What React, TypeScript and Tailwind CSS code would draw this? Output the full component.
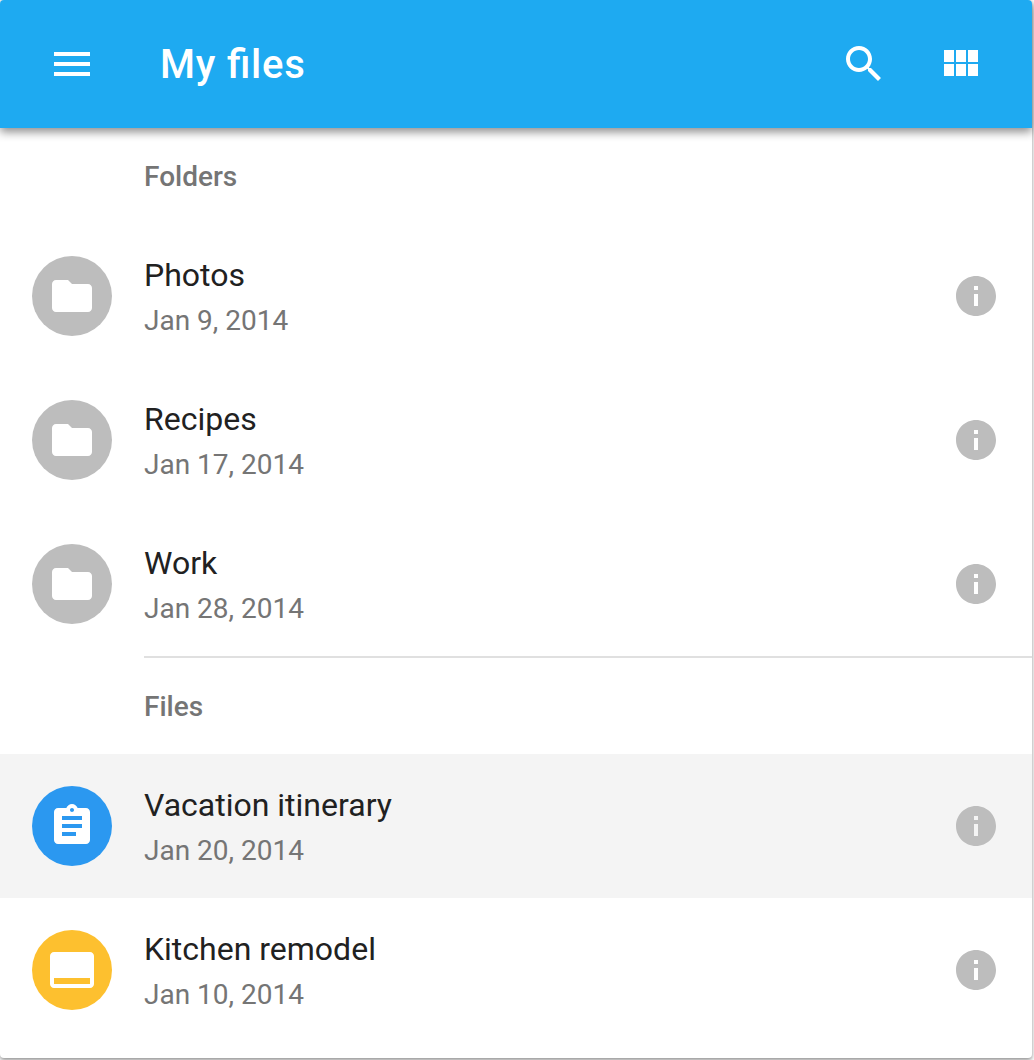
import type { ReactNode } from 'react';

const FOLDER = 'M10 4H4c-1.1 0-1.99.9-1.99 2L2 18c0 1.1.9 2 2 2h16c1.1 0 2-.9 2-2V8c0-1.1-.9-2-2-2h-8l-2-2z';
const ASSIGNMENT =
  'M19 3h-4.18C14.4 1.84 13.3 1 12 1c-1.3 0-2.4.84-2.82 2H5c-1.1 0-2 .9-2 2v14c0 1.1.9 2 2 2h14c1.1 0 2-.9 2-2V5c0-1.1-.9-2-2-2zm-7 0c.55 0 1 .45 1 1s-.45 1-1 1-1-.45-1-1 .45-1 1-1zm2 14H7v-2h7v2zm3-4H7v-2h10v2zm0-4H7V7h10v2z';
const SLIDE = 'M21 3H3c-1.1 0-2 .9-2 2v14c0 1.1.9 2 2 2h18c1.1 0 2-.9 2-2V5c0-1.1-.9-2-2-2zm0 16H3v-3h18v3z';
const INFO = 'M12 2C6.48 2 2 6.48 2 12s4.48 10 10 10 10-4.48 10-10S17.52 2 12 2zm1 15h-2v-6h2v6zm0-8h-2V7h2v2z';
const MENU = 'M3 18h18v-2H3v2zm0-5h18v-2H3v2zm0-7v2h18V6H3z';
const SEARCH =
  'M15.5 14h-.79l-.28-.27C15.41 12.59 16 11.11 16 9.5 16 5.91 13.09 3 9.5 3S3 5.91 3 9.5 5.91 16 9.5 16c1.61 0 3.09-.59 4.23-1.57l.27.28v.79l5 4.99L20.49 19l-4.99-5zm-6 0C7.01 14 5 11.99 5 9.5S7.01 5 9.5 5 14 7.01 14 9.5 11.99 14 9.5 14z';
const MODULES = 'M4 11h5V5H4v6zm0 7h5v-6H4v6zm6 0h5v-6h-5v6zm6 0h5v-6h-5v6zm-6-7h5V5h-5v6zm6-6v6h5V5h-5z';

function Icon({ d, className = '' }: { d: string; className?: string }) {
  return (
    <svg viewBox="0 0 24 24" className={`block h-12 w-12 shrink-0 ${className}`} fill="currentColor">
      <path d={d} />
    </svg>
  );
}

function Subheader({ children }: { children: ReactNode }) {
  return (
    <h3 className="flex h-24 items-center pl-36 pt-0.5 text-[28px] font-medium leading-8 text-[#757575]">{children}</h3>
  );
}

type RowProps = { name: string; date: string; icon: string; color: string; active?: boolean };

function Row({ name, date, icon, color, active }: RowProps) {
  return (
    <li className={`flex h-36 items-center px-8 ${active ? 'bg-[#f4f4f4]' : ''}`}>
      <div className={`flex h-20 w-20 shrink-0 items-center justify-center rounded-full text-white ${color}`}>
        <Icon d={icon} />
      </div>
      <div className="ml-8 flex-1">
        <div className="text-[32px] leading-[48px] text-[#212121]">{name}</div>
        <div className="-mb-px pt-px text-[28px] leading-[42px] text-[#757575]">{date}</div>
      </div>
      <button aria-label="Details">
        <Icon d={INFO} className="text-[#bdbdbd]" />
      </button>
    </li>
  );
}

export default function App() {
  return (
    <div className="h-[1060px] w-[1034px] overflow-hidden bg-white font-[Roboto,sans-serif]">
      <div className="h-[1058px] w-[1032px] rounded bg-white shadow-[0_2px_4px_rgba(0,0,0,0.45)]">
        <header className="relative flex h-32 items-center rounded-t bg-[#1eaaf1] pl-12 pr-12 text-white shadow-[0_4px_10px_rgba(0,0,0,0.45)]">
          <button aria-label="Menu">
            <Icon d={MENU} />
          </button>
          <h1 className="ml-16 flex-1 pt-0.5 text-[40px] font-medium leading-none tracking-[0.8px] [font-feature-settings:'liga'_1]">
            My files
          </h1>
          <button aria-label="Search">
            <Icon d={SEARCH} />
          </button>
          <button aria-label="Grid view" className="ml-12">
            <Icon d={MODULES} />
          </button>
        </header>
        <Subheader>Folders</Subheader>
        <ul>
          <Row name="Photos" date="Jan 9, 2014" icon={FOLDER} color="bg-[#bdbdbd]" />
          <Row name="Recipes" date="Jan 17, 2014" icon={FOLDER} color="bg-[#bdbdbd]" />
          <Row name="Work" date="Jan 28, 2014" icon={FOLDER} color="bg-[#bdbdbd]" />
        </ul>
        <hr className="ml-36 border-t-2 border-[#e0e0e0]" />
        <Subheader>Files</Subheader>
        <ul>
          <Row name="Vacation itinerary" date="Jan 20, 2014" icon={ASSIGNMENT} color="bg-[#2b98f0]" active />
          <Row name="Kitchen remodel" date="Jan 10, 2014" icon={SLIDE} color="bg-[#fdc02f]" />
        </ul>
      </div>
    </div>
  );
}
